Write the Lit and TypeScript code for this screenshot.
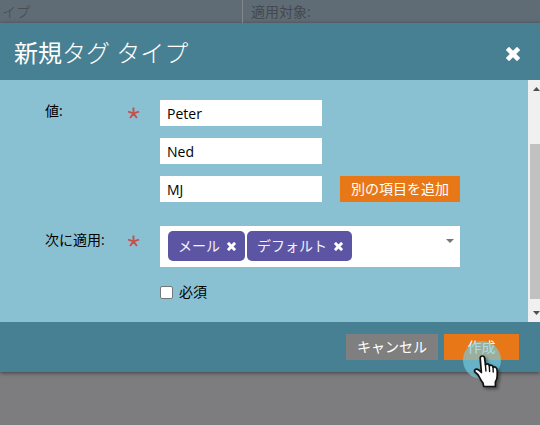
import { LitElement, html, css, svg } from "lit";
import { customElement, property } from "lit/decorators.js";

const cross = svg`<path d="M2 2 L10 10 M10 2 L2 10" fill="none" stroke="#fff" stroke-width="3.3"/>`;

@customElement("tag-chip")
class TagChip extends LitElement {
  @property() label = "";
  static styles = css`
    :host { display: flex; align-items: center; gap: 7px; height: 30px; box-sizing: border-box; padding: 0 9px 0 10px; border-radius: 5px; background: #5b55a3; color: #f4f3fb; }
    span { line-height: 20px; white-space: nowrap; }
    svg { width: 9px; height: 9px; margin-top: 1px; }
  `;
  render() {
    return html`<span>${this.label}</span><svg viewBox="1 1 10 10">${cross}</svg>`;
  }
}

@customElement("app-root")
class AppRoot extends LitElement {
  static styles = css`
    :host { display: block; position: relative; width: 540px; height: 425px; overflow: hidden; background: #7d7d7f; color: #000; font: 14px/20px "Open Sans", "Noto Sans CJK JP", sans-serif; }
    * { box-sizing: border-box; }
    .table { display: flex; height: 23px; background: #5f6b75; color: #45484c; overflow: hidden; white-space: nowrap; }
    .col { width: 243px; padding-top: 2px; border-right: 1px solid #85858a; }
    .col.first { font-weight: 300; text-indent: -12px; }
    .col.last { border: 0; padding: 2px 0 0 8px; }
    .dialog { box-shadow: 0 1px 4px rgba(0,0,0,.5); }
    header { display: flex; justify-content: space-between; align-items: center; height: 57px; padding: 0 20px 0 14px; background: #478092; color: #fff; }
    h1 { margin: 0; font-size: 24px; line-height: 36px; font-weight: 300; padding-top: 3px; }
    h1 b { font-weight: 400; }
    header svg { width: 14px; height: 14px; margin-top: 5px; }
    .body { display: flex; height: 242px; background: #8ac1d2; }
    form { display: flex; flex-direction: column; width: 528px; padding: 20px 0 0 45px; }
    .row { display: grid; grid-template-columns: 82px 33px 300px; align-items: start; }
    .label { padding-top: 1px; white-space: nowrap; }
    .label.tall { padding-top: 4px; }
    .star { width: 13px; height: 12px; margin-top: 7px; }
    .star.tall { margin-top: 9px; }
    .values { display: flex; flex-direction: column; gap: 12px; }
    .line { display: flex; gap: 18px; height: 26px; }
    .input { width: 162px; background: #fff; padding: 0 7px; line-height: 27px; }
    .button { display: flex; align-items: center; justify-content: center; height: 26px; color: #fff; background: #e87817; white-space: nowrap; }
    .add { width: 120px; }
    .apply { margin-top: 24px; }
    .select { display: flex; gap: 2px; height: 41px; padding: 5px 6px 0 8px; background: #fff; }
    .caret { width: 8px; height: 4px; margin: 8px 0 0 auto; }
    .check { display: flex; align-items: center; gap: 6px; margin: 15px 0 0 115px; height: 21px; }
    .check span:last-child { margin-top: -1px; }
    .box { width: 13px; height: 13px; border: 1px solid #767676; border-radius: 2px; background: #fff; }
    .scroll { display: flex; flex-direction: column; width: 12px; background: #f0f0f0; padding-left: 2px; }
    .scroll svg { width: 10px; height: 4px; margin: 7px 0 0 3px; flex: none; }
    .thumb { height: 155px; margin-top: 53px; background: #c1c1c1; }
    .scroll .down { margin-top: 12px; }
    footer { display: flex; justify-content: flex-end; gap: 6px; height: 50px; padding: 12px 21px 0 0; background: #478092; }
    .cancel { width: 92px; background: #7f7f80; padding-bottom: 1px; }
    .create { width: 75px; padding-bottom: 1px; }
    .halo { position: absolute; left: 463px; top: 341px; width: 38px; height: 38px; border-radius: 50%; background: rgba(119,203,226,.66); }
    .hand { position: absolute; left: 472px; top: 354px; width: 32px; height: 38px; filter: drop-shadow(2px 2px 1.5px rgba(0,0,0,.4)); }
  `;

  star(tall = "") {
    return html`<svg class="star ${tall}" viewBox="0 0 13 12"><path d="M6.5 6.4V.6M6.5 6.4 1 4.7M6.5 6.4 12 4.7M6.5 6.4 3.1 11M6.5 6.4 9.9 11" fill="none" stroke="#c4514e" stroke-width="1.9"/></svg>`;
  }

  render() {
    return html`
      <div class="table"><div class="col first">タイプ</div><div class="col last">適用対象:</div></div>
      <div class="dialog">
        <header><h1><b>新規</b>タグ タイプ</h1><svg viewBox="1 1 10 10">${cross}</svg></header>
        <div class="body">
          <form>
            <div class="row">
              <div class="label">値:</div>${this.star()}
              <div class="values">
                <div class="line"><div class="input">Peter</div></div>
                <div class="line"><div class="input">Ned</div></div>
                <div class="line"><div class="input">MJ</div><div class="button add">別の項目を追加</div></div>
              </div>
            </div>
            <div class="row apply">
              <div class="label tall">次に適用:</div>${this.star("tall")}
              <div class="select">
                <tag-chip label="メール"></tag-chip><tag-chip label="デフォルト"></tag-chip>
                <svg class="caret" viewBox="0 0 8 4"><path d="M0 0h8L4 4z" fill="#777"/></svg>
              </div>
            </div>
            <div class="check"><span class="box"></span><span>必須</span></div>
          </form>
          <div class="scroll">
            <svg viewBox="0 0 10 4"><path d="M0 4h7L3.5 0z" fill="#505050"/></svg>
            <div class="thumb"></div>
            <svg class="down" viewBox="0 0 10 4"><path d="M0 0h7L3.5 4z" fill="#505050"/></svg>
          </div>
        </div>
        <footer><div class="button cancel">キャンセル</div><div class="button create">作成</div></footer>
      </div>
      <div class="halo"></div>
      <svg class="hand" viewBox="0 0 32 38"><path d="M8.2 4.2Q8.2 2 10.3 2Q12.5 2 12.6 4.2L13.5 11Q14 9.6 15.6 9.9Q17.2 10.1 17.4 12Q18.1 10.9 19.6 11.3Q21.1 11.6 21.2 13.4Q22 12.5 23.5 13.2Q25.2 14 25.2 17V22Q25.2 25 23.4 28V32.5H11.7L11 29Q9 26.5 7.6 23.5Q6 20 3.2 18.3Q2 17 3 15.7Q4.6 14.5 7 16.2L9.4 18.5Z" fill="#fff" stroke="#111" stroke-width="1.7" stroke-linejoin="round"/><path d="M13.4 10.5l.5 6.5M17.3 12l.3 5.5M21.1 13.5l.1 4.5" fill="none" stroke="#111" stroke-width="1.4" stroke-linecap="round"/></svg>
    `;
  }
}
